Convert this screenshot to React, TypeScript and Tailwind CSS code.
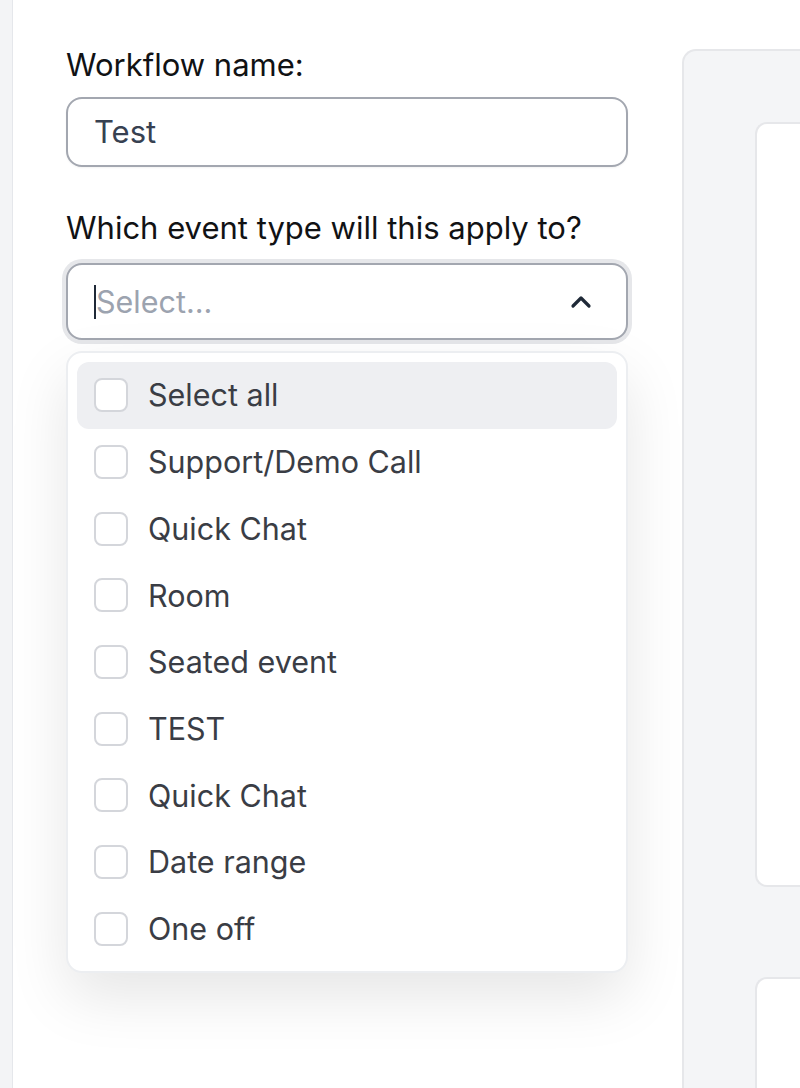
const options = [
  'Support/Demo Call',
  'Quick Chat',
  'Room',
  'Seated event',
  'TEST',
  'Quick Chat',
  'Date range',
  'One off',
];

function Checkbox() {
  return <span className="h-[34px] w-[34px] shrink-0 rounded-[8px] border-2 border-[#d4d6db] bg-white" />;
}

function Option({ label, active }: { label: string; active?: boolean }) {
  return (
    <div
      className={`flex h-[66.7px] items-center gap-[20px] rounded-[12px] pl-[17px] ${active ? 'bg-[#eeeff2]' : ''}`}>
      <Checkbox />
      <span className="text-[30.5px] text-[#3a3d45]">{label}</span>
    </div>
  );
}

export default function App() {
  return (
    <main
      className="flex min-h-screen bg-[#f3f4f6] pl-[12px]"
      style={{ fontFamily: 'Inter, "Noto Sans", sans-serif' }}>
      <div className="flex flex-1 border-l border-[#e5e7eb] bg-white">
        {/* form column */}
        <div className="w-[669px] shrink-0 pt-[44px] pr-[54px] pl-[53px]">
          <label className="block text-[31px] leading-[42px] text-[#111214]">Workflow name:</label>
          <div className="mt-[11px] flex h-[70px] items-center rounded-[16px] border-2 border-[#a3a7b0] bg-white px-[26px] shadow-[0_1px_2px_rgba(0,0,0,0.05)]">
            <span className="text-[31px] text-[#374151]">Test</span>
          </div>

          <label className="mt-[40px] block text-[31px] leading-[42px] text-[#111214]">
            Which event type will this apply to?
          </label>
          <div className="mt-[14px] flex h-[77px] items-center rounded-[16px] border-2 border-[#a3a7b0] bg-white pr-[34px] pl-[26px] ring-4 ring-[#e6e7ea]">
            <span className="h-[34px] w-[2px] bg-[#1f2937]" />
            <span className="flex-1 text-[30.5px] text-[#9ca3af]">Select...</span>
            <svg width="22" height="14" viewBox="0 0 22 14" fill="none">
              <path d="M3 11 L11 3 L19 11" stroke="#1f2937" strokeWidth="3.2" strokeLinecap="round" strokeLinejoin="round" />
            </svg>
          </div>

          <div className="mt-[11px] rounded-[16px] border-2 border-[#eceef1] bg-white p-[9px] shadow-[0_24px_60px_rgba(0,0,0,0.10)]">
            <Option label="Select all" active />
            {options.map((o, i) => (
              <Option key={i} label={o} />
            ))}
          </div>
        </div>

        {/* preview column */}
        <div className="mt-[49px] flex-1 rounded-tl-[14px] border-t-2 border-l-2 border-[#e6e7ea] bg-[#f4f5f7] pt-[71px] pl-[71px]">
          <div className="h-[765px] rounded-l-[12px] border-y-2 border-l-2 border-[#e6e7ea] bg-white" />
          <div className="mt-[90px] h-[120px] rounded-tl-[12px] border-t-2 border-l-2 border-[#e6e7ea] bg-white" />
        </div>
      </div>
    </main>
  );
}
